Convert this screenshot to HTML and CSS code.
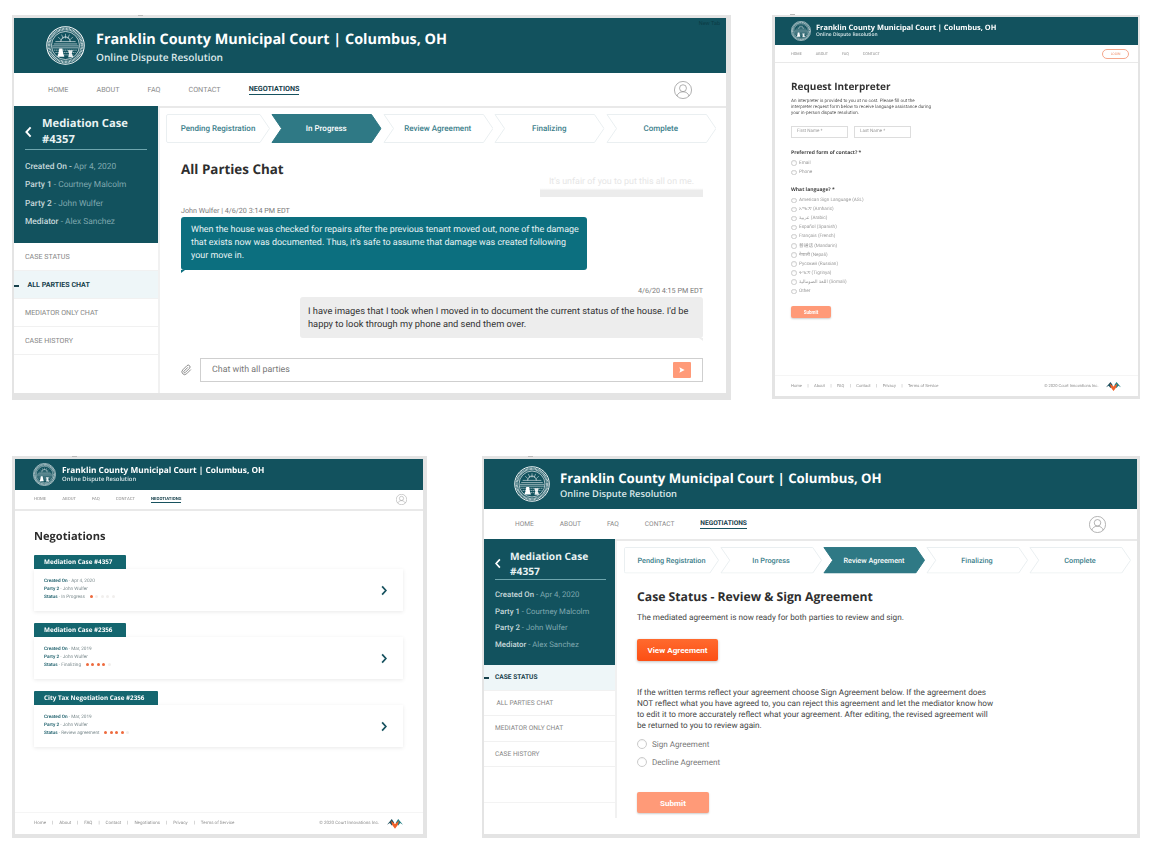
FILE: index.html
```html
<!DOCTYPE html>
<html lang="en">
<head>
<meta charset="utf-8">
<title>Franklin County Municipal Court | Online Dispute Resolution</title>
<link rel="stylesheet" href="styles.css">
</head>
<body>
<svg class="defs" width="0" height="0" aria-hidden="true">
  <symbol id="seal" viewBox="0 0 100 100">
    <g fill="none" stroke="#fff">
      <circle cx="50" cy="50" r="48" stroke-width="2.600"/>
      <circle cx="50" cy="50" r="42" stroke-width="7" stroke-dasharray="2.200 1.400" opacity=".8"/>
      <circle cx="50" cy="50" r="36" stroke-width="1.800"/>
      <path d="M24 40h52M20 46h60M16 51h68M17 56h66" stroke-width="1.500"/>
      <path d="M38 40a12 12 0 0 1 24 0" stroke-width="2"/>
      <path d="M50 20v12M40 22l4 10M60 22l-4 10M31 28l7 7M69 28l-7 7" stroke-width="1.300"/>
      <path d="M20 62h60M24 68h52M30 74h40" stroke-width="1.400" stroke-dasharray="4 1.500"/>
    </g>
    <path d="M34 58h8l2 12 3 9H29l3-9z" fill="#fff"/>
    <path d="M56 62h13l-3 8 4 10H57l2-10z" fill="#fff" opacity=".9"/>
  </symbol>
  <symbol id="logo" viewBox="0 0 40 26">
    <path d="M0 16 12 2l6 9-6 7-5-6z" fill="#1d4f5e"/>
    <path d="M40 16 28 2l-6 9 6 7 5-6z" fill="#1f7f84"/>
    <path d="M10 6l10 8 10-8-3 11-7 9-7-9z" fill="#f0622a"/>
  </symbol>
  <symbol id="user" viewBox="0 0 24 24">
    <g fill="none" stroke="#8a8a8a" stroke-width=".9">
      <circle cx="12" cy="12" r="11.400"/>
      <circle cx="12" cy="9.600" r="4.600"/>
      <path d="M3.900 20c1.200-3.600 4-5.600 8.100-5.600s6.900 2 8.100 5.600"/>
    </g>
  </symbol>
  <symbol id="back" viewBox="0 0 8 14">
    <path d="M6.500 1.500 1.500 7l5 5.500" fill="none" stroke="currentColor" stroke-width="2.200"/>
  </symbol>
  <symbol id="go" viewBox="0 0 8 14">
    <path d="M1.500 1.500 6.500 7l-5 5.500" fill="none" stroke="currentColor" stroke-width="2.300"/>
  </symbol>
  <symbol id="step" viewBox="0 0 110 29" preserveAspectRatio="none">
    <path d="M1 .5H100L109.500 14.500 100 28.500H1L10.500 14.500Z" vector-effect="non-scaling-stroke"/>
  </symbol>
  <symbol id="step-first" viewBox="0 0 104 29" preserveAspectRatio="none">
    <path d="M2 .5H94L103.500 14.500 94 28.500H2Q.5 28.500 .5 27V2Q.5 .5 2 .5Z" vector-effect="non-scaling-stroke"/>
  </symbol>
</svg>

<section class="win win-chat">
  <i class="speck"></i>
  <header class="head">
    <svg class="seal"><use href="#seal"/></svg>
    <div class="brand">
      <h1 class="brand-title">Franklin County Municipal Court | Columbus, OH</h1>
      <p class="brand-sub">Online Dispute Resolution</p>
    </div>
    <span class="newtab">New Tab</span>
  </header>
  <nav class="nav">
    <a>HOME</a><a>ABOUT</a><a>FAQ</a><a>CONTACT</a><a class="on">NEGOTIATIONS</a>
    <svg class="avatar"><use href="#user"/></svg>
  </nav>
  <div class="body">
    <aside class="side">
      <div class="case">
        <div class="case-head">
          <svg class="back"><use href="#back"/></svg>
          <h2 class="case-title">Mediation Case #4357</h2>
        </div>
        <p><b>Created On -</b> Apr 4, 2020</p>
        <p><b>Party 1</b> - Courtney Malcolm</p>
        <p><b>Party 2</b> - John Wulfer</p>
        <p><b>Mediator</b> - Alex Sanchez</p>
      </div>
      <ul class="menu">
        <li>CASE STATUS</li>
        <li class="on">ALL PARTIES CHAT</li>
        <li>MEDIATOR ONLY CHAT</li>
        <li>CASE HISTORY</li>
      </ul>
    </aside>
    <main class="main">
      <ol class="steps">
        <li class="step"><svg><use href="#step-first"/></svg><span>Pending Registration</span></li>
        <li class="step on"><svg><use href="#step"/></svg><span>In Progress</span></li>
        <li class="step"><svg><use href="#step"/></svg><span>Review Agreement</span></li>
        <li class="step"><svg><use href="#step"/></svg><span>Finalizing</span></li>
        <li class="step"><svg><use href="#step"/></svg><span>Complete</span></li>
      </ol>
      <h2 class="page-title">All Parties Chat</h2>
      <div class="ghost">It's unfair of you to put this all on me.</div>
      <p class="stamp">John Wulfer | 4/6/20 3:14 PM EDT</p>
      <div class="bubble them">When the house was checked for repairs after the previous tenant moved out, none of the damage that exists now was documented. Thus, it's safe to assume that damage was created following your move in.</div>
      <p class="stamp mine">4/6/20 4:15 PM EDT</p>
      <div class="bubble me">I have images that I took when I moved in to document the current status of the house. I'd be happy to look through my phone and send them over.</div>
      <div class="composer">
        <svg class="clip" viewBox="0 0 24 24"><path d="M21.440 11.050l-9.190 9.190a6 6 0 0 1-8.490-8.490l9.190-9.190a4 4 0 0 1 5.660 5.660l-9.200 9.190a2 2 0 0 1-2.830-2.830l8.490-8.480"/></svg>
        <div class="field">
          <span>Chat with all parties</span>
          <button class="send" type="button" aria-label="Send"><svg viewBox="0 0 12 12"><path d="M2 2l8 4-8 4 1.500-4z"/></svg></button>
        </div>
      </div>
    </main>
  </div>
</section>

<section class="win win-form">
  <i class="speck"></i>
  <header class="head">
    <svg class="seal"><use href="#seal"/></svg>
    <div class="brand">
      <h1 class="brand-title">Franklin County Municipal Court | Columbus, OH</h1>
      <p class="brand-sub">Online Dispute Resolution</p>
    </div>
  </header>
  <nav class="nav">
    <a>HOME</a><a>ABOUT</a><a>FAQ</a><a>CONTACT</a>
    <span class="login">LOGIN</span>
  </nav>
  <main class="form">
    <h2 class="form-title">Request Interpreter</h2>
    <p class="form-lead">An interpreter is provided to you at no cost. Please fill out the interpreter request form below to receive language assistance during your in-person dispute resolution.</p>
    <div class="names"><span class="input">First Name *</span><span class="input">Last Name *</span></div>
    <h3 class="q">Preferred form of contact? *</h3>
    <ul class="opts">
      <li><i class="radio"></i>Email</li>
      <li><i class="radio"></i>Phone</li>
    </ul>
    <h3 class="q q-lang">What language? *</h3>
    <ul class="opts">
      <li><i class="radio"></i>American Sign Language (ASL)</li>
      <li><i class="radio"></i>አማርኛ (Amharic)</li>
      <li><i class="radio"></i>عربية (Arabic)</li>
      <li><i class="radio"></i>Español (Spanish)</li>
      <li><i class="radio"></i>Français (French)</li>
      <li><i class="radio"></i>普通话 (Mandarin)</li>
      <li><i class="radio"></i>नेपाली (Nepali)</li>
      <li><i class="radio"></i>Русский (Russian)</li>
      <li><i class="radio"></i>ትግርኛ (Tigrinya)</li>
      <li><i class="radio"></i>اللغة الصومالية (Somali)</li>
      <li><i class="radio"></i>Other</li>
    </ul>
    <button class="btn-soft" type="button">Submit</button>
  </main>
  <footer class="foot">
    <span>Home</span><i>|</i><span>About</span><i>|</i><span>FAQ</span><i>|</i><span>Contact</span><i>|</i><span>Privacy</span><i>|</i><span>Terms of Service</span>
    <span class="copy">© 2020 Court Innovations Inc.</span>
    <svg class="logo"><use href="#logo"/></svg>
  </footer>
</section>

<section class="win win-list">
  <i class="speck"></i>
  <header class="head">
    <svg class="seal"><use href="#seal"/></svg>
    <div class="brand">
      <h1 class="brand-title">Franklin County Municipal Court | Columbus, OH</h1>
      <p class="brand-sub">Online Dispute Resolution</p>
    </div>
  </header>
  <nav class="nav">
    <a>HOME</a><a>ABOUT</a><a>FAQ</a><a>CONTACT</a><a class="on">NEGOTIATIONS</a>
    <svg class="avatar"><use href="#user"/></svg>
  </nav>
  <main class="list">
    <h2 class="list-title">Negotiations</h2>
    <article class="item">
      <h3 class="tab">Mediation Case #4357</h3>
      <div class="card">
        <div class="card-lines">
          <p><b>Created On</b> - Apr 4, 2020</p>
          <p><b>Party 2</b> - John Wulfer</p>
          <p><b>Status</b> - In Progress <span class="dots"><i class="hot"></i><i></i><i></i><i></i><i></i></span></p>
        </div>
        <svg class="go"><use href="#go"/></svg>
      </div>
    </article>
    <article class="item">
      <h3 class="tab">Mediation Case #2356</h3>
      <div class="card">
        <div class="card-lines">
          <p><b>Created On</b> - Mar, 2019</p>
          <p><b>Party 2</b> - John Wulfer</p>
          <p><b>Status</b> - Finalizing <span class="dots"><i class="hot"></i><i class="hot"></i><i class="hot"></i><i class="hot"></i><i></i></span></p>
        </div>
        <svg class="go"><use href="#go"/></svg>
      </div>
    </article>
    <article class="item">
      <h3 class="tab">City Tax Negotiation Case #2356</h3>
      <div class="card">
        <div class="card-lines">
          <p><b>Created On</b> - Mar, 2019</p>
          <p><b>Party 2</b> - John Wulfer</p>
          <p><b>Status</b> - Review agreement <span class="dots"><i class="hot"></i><i class="hot"></i><i class="hot"></i><i class="hot"></i><i></i></span></p>
        </div>
        <svg class="go"><use href="#go"/></svg>
      </div>
    </article>
  </main>
  <footer class="foot">
    <span>Home</span><i>|</i><span>About</span><i>|</i><span>FAQ</span><i>|</i><span>Contact</span><i>|</i><span>Negotiations</span><i>|</i><span>Privacy</span><i>|</i><span>Terms of Service</span>
    <span class="copy">© 2020 Court Innovations Inc.</span>
    <svg class="logo"><use href="#logo"/></svg>
  </footer>
</section>

<section class="win win-status">
  <i class="speck"></i>
  <header class="head">
    <svg class="seal"><use href="#seal"/></svg>
    <div class="brand">
      <h1 class="brand-title">Franklin County Municipal Court | Columbus, OH</h1>
      <p class="brand-sub">Online Dispute Resolution</p>
    </div>
  </header>
  <nav class="nav">
    <a>HOME</a><a>ABOUT</a><a>FAQ</a><a>CONTACT</a><a class="on">NEGOTIATIONS</a>
    <svg class="avatar"><use href="#user"/></svg>
  </nav>
  <div class="body">
    <aside class="side">
      <div class="case">
        <div class="case-head">
          <svg class="back"><use href="#back"/></svg>
          <h2 class="case-title">Mediation Case #4357</h2>
        </div>
        <p><b>Created On</b> - Apr 4, 2020</p>
        <p><b>Party 1</b> - Courtney Malcolm</p>
        <p><b>Party 2</b> - John Wulfer</p>
        <p><b>Mediator</b> - Alex Sanchez</p>
      </div>
      <ul class="menu">
        <li class="on">CASE STATUS</li>
        <li class="inset">ALL PARTIES CHAT</li>
        <li>MEDIATOR ONLY CHAT</li>
        <li>CASE HISTORY</li>
      </ul>
    </aside>
    <main class="main">
      <ol class="steps">
        <li class="step"><svg><use href="#step-first"/></svg><span>Pending Registration</span></li>
        <li class="step"><svg><use href="#step"/></svg><span>In Progress</span></li>
        <li class="step on"><svg><use href="#step"/></svg><span>Review Agreement</span></li>
        <li class="step"><svg><use href="#step"/></svg><span>Finalizing</span></li>
        <li class="step"><svg><use href="#step"/></svg><span>Complete</span></li>
      </ol>
      <h2 class="page-title">Case Status - Review &amp; Sign Agreement</h2>
      <p class="lead">The mediated agreement is now ready for both parties to review and sign.</p>
      <button class="btn-hot" type="button">View Agreement</button>
      <p class="terms">If the written terms reflect your agreement choose Sign Agreement below. If the agreement does NOT reflect what you have agreed to, you can reject this agreement and let the mediator know how to edit it to more accurately reflect what your agreement. After editing, the revised agreement will be returned to you to review again.</p>
      <ul class="choices">
        <li><i class="radio"></i>Sign Agreement</li>
        <li><i class="radio"></i>Decline Agreement</li>
      </ul>
      <button class="btn-soft" type="button">Submit</button>
    </main>
  </div>
</section>
</body>
</html>
```

FILE: styles.css
```css
* { box-sizing: border-box; }
html, body { margin: 0; padding: 0; }
body {
  position: relative;
  width: 1157px;
  height: 850px;
  overflow: hidden;
  background: #fff;
  font-family: Roboto, "Noto Sans", "Noto Sans CJK SC", "DejaVu Sans", sans-serif;
  color: #444;
  text-rendering: geometricPrecision;
}
h1, h2, h3, p, ul, ol { margin: 0; padding: 0; list-style: none; }
i { font-style: normal; }
.defs { position: absolute; }

/* windows on the canvas */
.win {
  position: absolute;
  display: flex;
  flex-direction: column;
  background: #fff;
  border-style: solid;
  border-color: #e4e4e4;
}
.win-chat { left: 12px; top: 15px; width: 719px; height: 385px; border-width: 3px 5px 7px 2px; }
.win-form { left: 772px; top: 15px; width: 368px; height: 384px; border-width: 2px 2px 3px 3px; filter: blur(.3px); }
.win-list { left: 12px; top: 456px; width: 415px; height: 382px; border-width: 3px 4px 4px 3px; filter: blur(.25px); }
.win-status { left: 482px; top: 456px; width: 658px; height: 382px; border-width: 3px 3px 4px 2px; }

.speck {
  position: absolute;
  top: -3px;
  left: 124px;
  width: 5px;
  height: 1px;
  background: #bbb;
}
.win-form .speck { left: 15px; }
.win-list .speck { left: 57px; }
.win-status .speck { left: 44px; }

/* header */
.head {
  flex: none;
  position: relative;
  display: flex;
  align-items: center;
  background: #12525e;
  color: #fff;
}
.seal { flex: none; }
.brand-title { font-family: "Open Sans", sans-serif; font-weight: 700; white-space: nowrap; line-height: 1.2; }
.brand-sub { font-family: "Open Sans", sans-serif; font-weight: 600; white-space: nowrap; line-height: 1.2; color: #dce9eb; }
.newtab {
  position: absolute;
  top: 3px;
  right: 6px;
  font-size: 5.500px;
  color: #0b3b45;
}

.win-chat .head { height: 55px; padding-left: 32px; gap: 11px; }
.win-chat .seal { width: 39px; height: 39px; }
.win-chat .brand { margin-top: 3px; }
.win-chat .brand-title { font-size: 14.400px; }
.win-chat .brand-sub { font-size: 10.100px; margin-top: 2px; }

.win-status .head { height: 50px; padding-left: 30px; gap: 10px; }
.win-status .seal { width: 36px; height: 36px; }
.win-status .brand { margin-top: 2px; }
.win-status .brand-title { font-size: 13.200px; }
.win-status .brand-sub { font-size: 9.300px; margin-top: 1px; }

.win-list .head { height: 31px; padding-left: 18px; gap: 6px; }
.win-list .seal { width: 23px; height: 23px; }
.win-list .brand-title { font-size: 8.300px; }
.win-list .brand-sub { font-size: 5.900px; }

.win-form .head { height: 28px; padding-left: 16px; gap: 5px; }
.win-form .seal { width: 20px; height: 20px; }
.win-form .brand-title { font-size: 7.400px; }
.win-form .brand-sub { font-size: 4.900px; }

/* top nav */
.nav {
  flex: none;
  display: flex;
  align-items: center;
  background: #fff;
  border-bottom: 2px solid #e9e9e9;
  color: #8b8b8b;
  white-space: nowrap;
}
.nav a.on { color: #17414c; font-weight: 700; border-bottom: 1px solid #17525f; }
.avatar { margin-left: auto; flex: none; }

.win-chat .nav { height: 35px; padding: 0 34px 0 34px; gap: 28px; font-size: 7.200px; }
.win-chat .avatar { width: 18px; height: 18px; }
.win-chat .nav a.on { padding-bottom: 1px; }

.win-status .nav { height: 32px; padding: 0 31px 0 31px; gap: 26px; font-size: 6.600px; }
.win-status .avatar { width: 17px; height: 17px; }
.win-status .nav a.on { padding-bottom: 1px; }

.win-list .nav { height: 21px; padding: 0 16px 0 19px; gap: 16px; font-size: 4.300px; }
.win-list .avatar { width: 11px; height: 11px; }

.win-form .nav { height: 18px; padding: 0 9px 0 16px; gap: 14px; font-size: 3.800px; border-bottom-width: 1px; }
.login {
  margin-left: auto;
  width: 27px;
  height: 10px;
  border: 1px solid #f5a78c;
  border-radius: 5px;
  color: #f0906c;
  font-size: 3.400px;
  line-height: 8px;
  text-align: center;
}

/* two-pane body */
.body { flex: 1; display: flex; min-height: 0; }
.side { flex: none; border-right: 2px solid #f1f1f1; }
.case { position: relative; margin-top: -2px; background: #12525e; color: #7fa8af; }
.case p { white-space: nowrap; }
.case b { font-weight: 500; color: #c6d8db; }
.case-head { display: flex; align-items: center; border-bottom: 1px solid #6ea6ae; color: #fff; }
.back { flex: none; }
.case-title { font-family: "Open Sans", sans-serif; font-weight: 700; color: #e9f2f3; }
.menu li { border-bottom: 1px solid #f1f1f1; color: #868686; display: flex; align-items: center; position: relative; white-space: nowrap; }
.menu li.on { background: #eef6f8; color: #17414c; font-weight: 700; }
.menu li.on::before {
  content: "";
  position: absolute;
  left: 0;
  top: 50%;
  width: 5px;
  height: 2px;
  background: #17414c;
}

.win-chat .side { width: 146px; }
.win-chat .case { height: 137px; padding: 9px 11px 0 11px; font-size: 8.400px; line-height: 18.300px; }
.win-chat .case-head { width: 122px; height: 35px; gap: 10px; margin-bottom: 8px; }
.win-chat .back { width: 7px; height: 12px; }
.win-chat .case-title { font-size: 11.200px; line-height: 16px; }
.win-chat .menu li { height: 28px; padding-left: 11px; font-size: 7.100px; }
.win-chat .menu li.on { padding-left: 13.500px; }

.win-status .side { width: 133px; align-self: flex-start; height: 277px; }
.win-status .case { height: 126px; padding: 9px 11px 0 11px; font-size: 7.800px; line-height: 16.700px; }
.win-status .case-head { width: 111px; height: 32px; gap: 9px; margin-bottom: 7px; }
.win-status .back { width: 6px; height: 11px; }
.win-status .case-title { font-size: 10.200px; line-height: 14.500px; }
.win-status .menu { height: 138px; border-bottom: 1px solid #f3f3f3; }
.win-status .menu li { height: 25.500px; padding-left: 11px; font-size: 6.600px; }
.win-status .menu li.inset { padding-left: 12.500px; }

/* progress steps */
.main { flex: 1; min-width: 0; display: flex; flex-direction: column; align-items: flex-start; }
.steps { display: grid; align-self: stretch; }
.step { position: relative; display: flex; align-items: center; justify-content: center; font-weight: 500; color: #3c808b; }
.step svg { position: absolute; inset: 0; width: 100%; height: 100%; fill: #fff; stroke: #eaeff1; stroke-width: 1; }
.step span { position: relative; white-space: nowrap; }
.step.on { color: #fff; }
.step.on svg { fill: #2f7985; stroke: #2f7985; }
.page-title { font-family: "Open Sans", sans-serif; font-weight: 700; color: #2e2e2e; white-space: nowrap; }

.win-chat .main { padding: 6px 23px 11px 21px; }
.win-chat .steps { grid-template-columns: 104px repeat(4, 110.500px); gap: 1px; height: 29px; margin: 0 0 0 -15px; font-size: 8px; }
.win-chat .page-title { font-size: 13.400px; line-height: 20px; margin-top: 16px; }
.ghost {
  align-self: flex-end;
  width: 163px;
  height: 22px;
  margin-top: -4px;
  padding-top: 1px;
  background: linear-gradient(#fff 0, #fff 60%, #ececec 70%);
  color: #e6e6e6;
  font-size: 8.900px;
  line-height: 12px;
  text-align: center;
  white-space: nowrap;
}
.stamp { font-size: 7.200px; line-height: 10px; color: #7a7a7a; margin-top: 9px; white-space: nowrap; }
.stamp.mine { align-self: flex-end; margin-top: 16px; }
.bubble { position: relative; font-size: 9.300px; line-height: 13px; border-radius: 3px; }
.bubble::after {
  content: "";
  position: absolute;
  bottom: -3px;
  border-style: solid;
}
.them { width: 406px; height: 53px; margin-top: 1px; padding: 7px 8px 0 10px; background: #0c6f7f; color: #e8f3f5; font-size: 8.950px; }
.them::after { left: 0; border-width: 3px 4px 0 0; border-color: #0c6f7f transparent transparent transparent; }
.me { align-self: flex-end; width: 403px; height: 41px; margin-top: 1px; padding: 8px 8px 0 8px; background: #ededed; color: #333; }
.me::after { right: 0; border-width: 3px 0 0 4px; border-color: #ededed transparent transparent transparent; }

.composer { align-self: stretch; display: flex; align-items: center; gap: 8px; margin: auto 0 0 0; }
.clip { flex: none; width: 11px; height: 14px; fill: none; stroke: #777; stroke-width: 1.800; }
.field {
  flex: 1;
  height: 24px;
  display: flex;
  align-items: center;
  justify-content: space-between;
  padding: 0 11px 0 11px;
  border: 1px solid #cfcfcf;
  font-size: 8.850px;
  color: #777;
}
.send { width: 18px; height: 16px; padding: 0; border: 0; border-radius: 1px; background: #ff9a78; display: flex; align-items: center; justify-content: center; }
.send svg { width: 8px; height: 8px; fill: #fff; }

.win-status .main { padding: 6px 0 0 20px; }
.win-status .steps { grid-template-columns: 95px repeat(4, 102px); gap: 1px; height: 26.500px; margin: 0 0 0 -13px; font-size: 7.300px; }
.win-status .page-title { font-size: 12.200px; line-height: 18px; margin-top: 14px; }
.lead { font-size: 8.200px; line-height: 11px; color: #444; margin-top: 7px; white-space: nowrap; }
.btn-hot {
  width: 81px;
  height: 22px;
  margin-top: 15px;
  padding: 0;
  border: 0;
  border-radius: 2px;
  background: linear-gradient(#ff6a2e, #fc4f14);
  box-shadow: 0 1px 3px rgba(0, 0, 0, .25);
  color: #fff;
  font: 700 8.100px Roboto, sans-serif;
}
.terms { width: 360px; margin-top: 27px; font-size: 8.200px; line-height: 11.200px; color: #444; }
.choices { margin-top: 3px; font-size: 8.100px; color: #777; }
.choices li { height: 17.500px; display: flex; align-items: center; gap: 5px; }
.choices .radio { width: 10px; height: 10px; border: 1px solid #ccc; }
.radio { flex: none; border-radius: 50%; background: #fff; box-shadow: inset 0 1px 1px rgba(0, 0, 0, .06); }
.btn-soft {
  padding: 0;
  border: 0;
  border-radius: 2px;
  background: #ff9a78;
  box-shadow: 0 1px 2px rgba(0, 0, 0, .2);
  color: #fff;
  font-family: Roboto, sans-serif;
  font-weight: 700;
}
.win-status .btn-soft { width: 72px; height: 21px; margin-top: 22px; font-size: 8.100px; }

/* form window */
.form { flex: 1; padding: 16px 0 0 16px; }
.form-title { font-family: "Open Sans", sans-serif; font-weight: 700; font-size: 10px; line-height: 14px; color: #333; white-space: nowrap; }
.form-lead { width: 142px; margin-top: 6px; font-size: 4.600px; line-height: 6.200px; color: #555; }
.names { display: flex; gap: 6px; margin-top: 8px; }
.input { width: 57px; height: 12px; padding-left: 5px; border: 1px solid #ddd; font-size: 4.600px; line-height: 10px; color: #999; }
.q { font-family: "Open Sans", sans-serif; font-weight: 700; font-size: 5px; line-height: 7px; color: #444; margin-top: 12px; }
.q-lang { margin-top: 10px; }
.opts { margin-top: 2px; font-size: 4.700px; color: #999; }
.opts li { height: 9.100px; display: flex; align-items: center; gap: 2.500px; white-space: nowrap; }
.opts .radio { width: 5.500px; height: 5.500px; border: .5px solid #ccc; }
.win-form .btn-soft { display: block; width: 40px; height: 12px; margin-top: 10.500px; font-size: 4.600px; }

/* list window */
.list { flex: 1; padding: 17px 20px 0 19px; }
.list-title { font-family: "Open Sans", sans-serif; font-weight: 700; font-size: 11.100px; line-height: 17px; color: #2e2e2e; }
.item { margin-top: 10px; }
.item + .item { margin-top: 12px; }
.tab {
  width: fit-content;
  height: 14px;
  padding: 0 14px 0 10px;
  border-radius: 1px 1px 0 0;
  background: #14666f;
  color: #fff;
  font-family: "Open Sans", sans-serif;
  font-weight: 700;
  font-size: 6.300px;
  line-height: 14px;
}
.card {
  height: 42px;
  display: flex;
  align-items: center;
  justify-content: space-between;
  padding: 0 16px 0 10px;
  background: #fff;
  box-shadow: 0 1px 4px rgba(0, 0, 0, .09);
}
.card-lines { font-size: 4.700px; line-height: 8.200px; color: #7b8a8d; }
.card-lines b { font-weight: 700; color: #2d6b76; }
.dots { display: inline-flex; gap: 2.300px; margin-left: 3.500px; vertical-align: middle; }
.dots i { width: 3.200px; height: 3.200px; border-radius: 50%; background: #f1efed; }
.dots i.hot { background: #ee6a3d; }
.go { width: 6px; height: 11px; color: #17525f; }

/* footer */
.foot {
  flex: none;
  display: flex;
  align-items: center;
  border-top: 1px solid #f5f5f5;
  color: #8e8e8e;
  white-space: nowrap;
}
.copy { margin-left: auto; }
.logo { flex: none; }
.win-list .foot { height: 22px; padding: 0 20px 0 19px; gap: 6px; font-size: 4.500px; }
.win-list .logo { width: 16px; height: 11px; margin-left: 2px; }
.win-form .foot { height: 21px; padding: 0 17px 0 16px; gap: 5.500px; font-size: 4.100px; }
.win-form .logo { width: 15px; height: 10px; margin-left: 2px; }
```
